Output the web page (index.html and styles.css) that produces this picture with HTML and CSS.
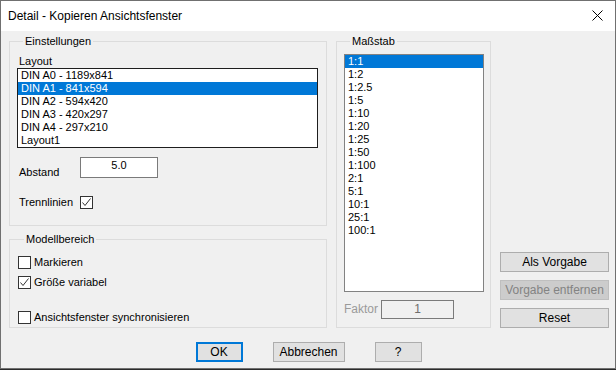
FILE: index.html
```html
<!DOCTYPE html>
<html lang="de">
<head>
  <meta charset="UTF-8">
  <title>Detail - Kopieren Ansichtsfenster</title>
  <link rel="stylesheet" href="styles.css">
</head>
<body>
  <div class="window">
    <div class="titlebar">
      <span class="title">Detail - Kopieren Ansichtsfenster</span>
      <svg class="close" width="11" height="11" viewBox="0 0 11 11">
        <path d="M0.5 0.5 L10.5 10.5 M10.5 0.5 L0.5 10.5" stroke="#000" stroke-width="1" fill="none"/>
      </svg>
    </div>

    <div class="content">
      <div class="main">
        <div class="leftcol">
          <fieldset class="group settings">
            <legend>Einstellungen</legend>
            <div class="caption">Layout</div>
            <div class="listbox layouts">
              <div class="item">DIN A0 - 1189x841</div>
              <div class="item selected">DIN A1 - 841x594</div>
              <div class="item">DIN A2 - 594x420</div>
              <div class="item">DIN A3 - 420x297</div>
              <div class="item">DIN A4 - 297x210</div>
              <div class="item">Layout1</div>
            </div>
            <div class="row spacing">
              <span class="rowlabel">Abstand</span>
              <div class="textbox">5.0</div>
            </div>
            <div class="row dividers">
              <span class="rowlabel">Trennlinien</span>
              <span class="check checked">
                <svg width="11" height="11" viewBox="0 0 11 11"><path d="M1.5 5.5 L4 8.5 L9.5 1.5" stroke="#333" stroke-width="1" fill="none"/></svg>
              </span>
            </div>
          </fieldset>

          <fieldset class="group model">
            <legend>Modellbereich</legend>
            <label class="option">
              <span class="check"></span>Markieren
            </label>
            <label class="option">
              <span class="check checked">
                <svg width="11" height="11" viewBox="0 0 11 11"><path d="M1.5 5.5 L4 8.5 L9.5 1.5" stroke="#333" stroke-width="1" fill="none"/></svg>
              </span>Größe variabel
            </label>
            <label class="option sync">
              <span class="check"></span>Ansichtsfenster synchronisieren
            </label>
          </fieldset>
        </div>

        <fieldset class="group scale">
          <legend>Maßstab</legend>
          <div class="listbox scales">
            <div class="item selected">1:1</div>
            <div class="item">1:2</div>
            <div class="item">1:2.5</div>
            <div class="item">1:5</div>
            <div class="item">1:10</div>
            <div class="item">1:20</div>
            <div class="item">1:25</div>
            <div class="item">1:50</div>
            <div class="item">1:100</div>
            <div class="item">2:1</div>
            <div class="item">5:1</div>
            <div class="item">10:1</div>
            <div class="item">25:1</div>
            <div class="item">100:1</div>
          </div>
          <div class="row factor">
            <span class="rowlabel disabled">Faktor</span>
            <div class="textbox disabled">1</div>
          </div>
        </fieldset>

        <div class="rightcol">
          <button class="btn wide">Als Vorgabe</button>
          <button class="btn wide" disabled>Vorgabe entfernen</button>
          <button class="btn wide">Reset</button>
        </div>
      </div>

      <div class="footer">
        <button class="btn small default">OK</button>
        <button class="btn medium">Abbrechen</button>
        <button class="btn small">?</button>
      </div>
    </div>
  </div>
</body>
</html>
```

FILE: styles.css
```css
body {
  margin: 0;
  background: #2b2b2b;
  font-family: "Liberation Sans", Arial, sans-serif;
  font-size: 11px;
  color: #000;
}
.window {
  width: 616px;
  height: 369px;
  box-sizing: border-box;
  border: 1px solid #707070;
  background: #f0f0f0;
  display: flex;
  flex-direction: column;
}
.titlebar {
  height: 30px;
  background: #fff;
  display: flex;
  align-items: center;
  justify-content: space-between;
  padding: 0 12px 0 7px;
  flex-shrink: 0;
}
.title {
  font-size: 12px;
  margin-top: -1px;
}
.close {
  margin-top: -1px;
}
.content {
  padding: 4px 6px 0 8px;
}
.main {
  display: flex;
  gap: 9px;
}
.leftcol {
  width: 318px;
  flex-shrink: 0;
  display: flex;
  flex-direction: column;
  gap: 7px;
}
.group {
  margin: 0;
  border: 1px solid #dcdcdc;
  box-sizing: border-box;
  min-width: 0;
}
.group legend {
  padding: 0 2px;
  margin-left: 6px;
  line-height: 13px;
}
.settings {
  height: 191px;
  padding: 7px 8px 0 7px;
}
.model {
  height: 95px;
  padding: 10px 8px 0 8px;
}
.scale {
  width: 155px;
  flex-shrink: 0;
  height: 293px;
  padding: 6px 6px 0 7px;
}
.caption {
  line-height: 13px;
  margin-left: 2px;
}
.listbox {
  background: #fff;
  box-sizing: border-box;
}
.layouts {
  width: 301px;
  height: 80px;
  border: 1px solid #1e1e1e;
}
.scales {
  width: 140px;
  height: 238px;
  border: 1px solid #828282;
}
.item {
  height: 13px;
  line-height: 13px;
  padding-left: 3px;
  white-space: nowrap;
}
.item.selected {
  background: #0078d7;
  color: #fff;
}
.row {
  display: flex;
}
.rowlabel {
  line-height: 13px;
  margin-left: 2px;
}
.spacing {
  margin-top: 9px;
  align-items: flex-end;
}
.spacing .rowlabel {
  width: 61px;
  margin-bottom: -1px;
}
.textbox {
  box-sizing: border-box;
  background: #fff;
  border: 1px solid #7a7a7a;
  text-align: center;
}
.spacing .textbox {
  width: 78px;
  height: 21px;
  line-height: 15px;
}
.dividers {
  margin-top: 18px;
  align-items: center;
}
.dividers .rowlabel {
  width: 61px;
}
.check {
  width: 13px;
  height: 13px;
  box-sizing: border-box;
  border: 1px solid #333;
  background: #fff;
  display: inline-flex;
  flex-shrink: 0;
}
.option {
  display: flex;
  align-items: center;
  gap: 3px;
  line-height: 13px;
  height: 13px;
}
.option + .option {
  margin-top: 7px;
}
.option.sync {
  margin-top: 22px;
}
.factor {
  margin-top: 8px;
  align-items: center;
}
.factor .rowlabel {
  width: 37px;
  margin-left: 0;
  font-size: 12px;
}
.disabled {
  color: #9a9a9a;
}
.textbox.disabled {
  width: 73px;
  height: 19px;
  line-height: 17px;
  background: #f0f0f0;
  color: #6d6d6d;
  border-color: #7a7a7a;
  font-size: 12px;
}
.rightcol {
  width: 109px;
  flex-shrink: 0;
  display: flex;
  flex-direction: column;
  justify-content: flex-end;
  gap: 8px;
}
.btn {
  font-family: "Liberation Sans", Arial, sans-serif;
  font-size: 12px;
  color: #000;
  background: #e1e1e1;
  border: 1px solid #adadad;
  height: 20px;
  padding: 0;
  box-sizing: border-box;
}
.btn:disabled {
  background: #cccccc;
  border-color: #bfbfbf;
  color: #838383;
}
.btn.wide {
  width: 109px;
}
.btn.small {
  width: 47px;
}
.btn.medium {
  width: 72px;
}
.btn.default {
  border: 2px solid #0078d7;
}
.footer {
  display: flex;
  justify-content: center;
  gap: 30px;
  margin-top: 14px;
  padding-right: 1px;
}
```
